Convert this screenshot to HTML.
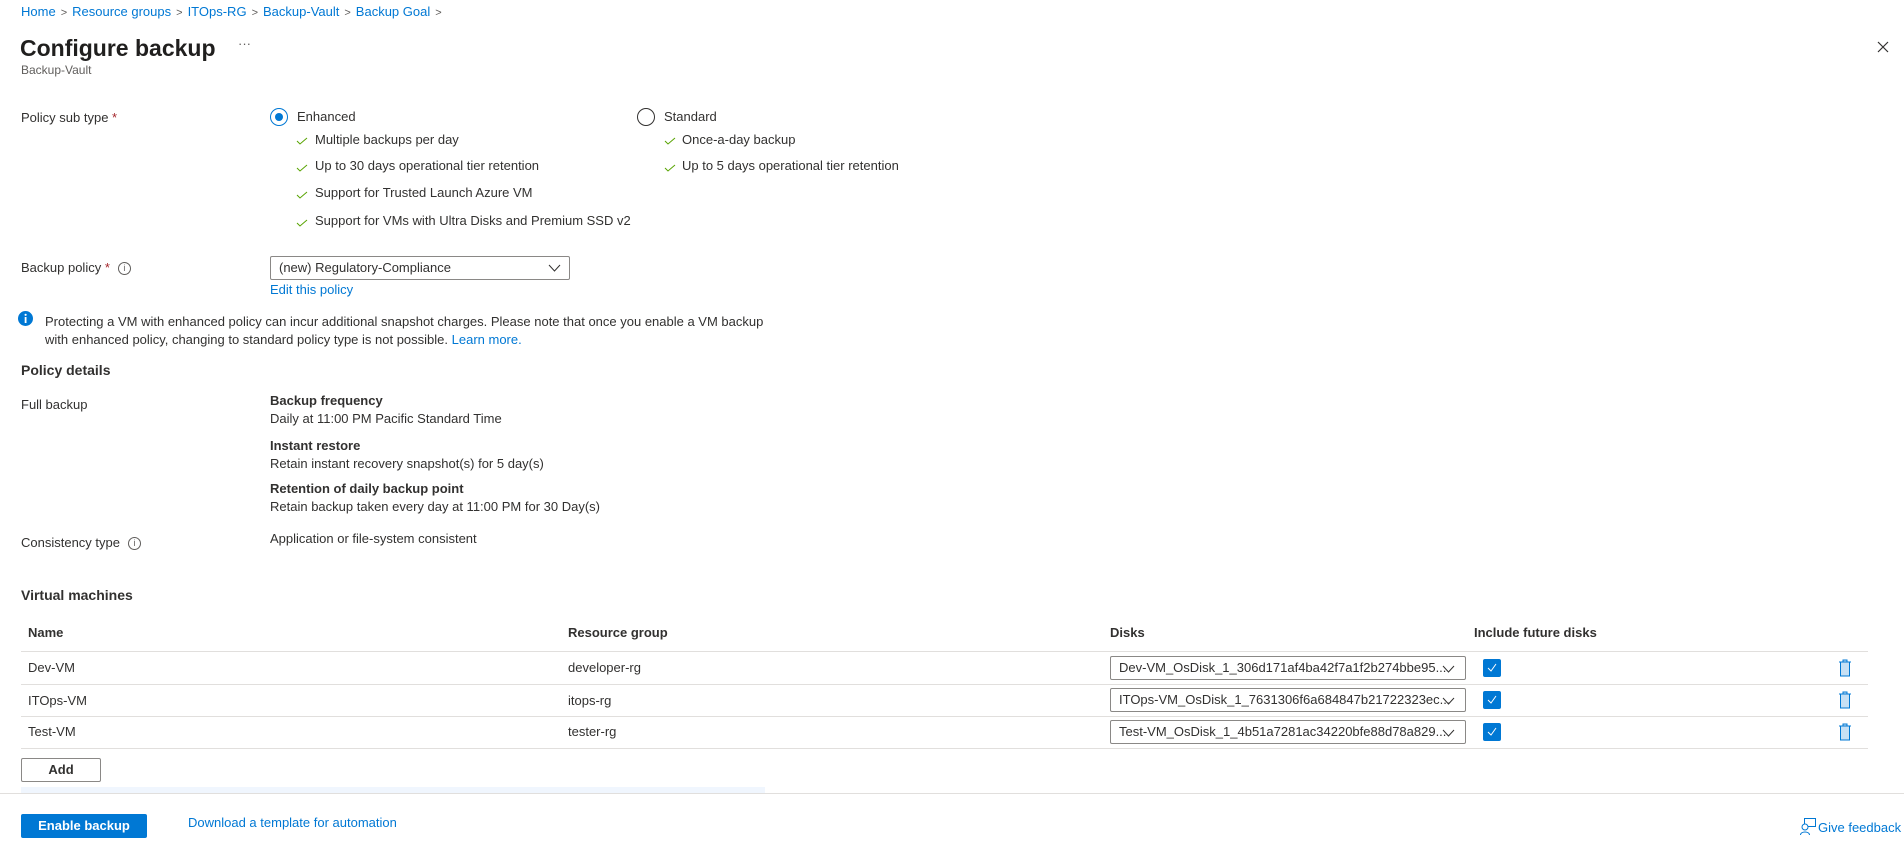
<!DOCTYPE html>
<html><head><meta charset="utf-8"><style>
*{box-sizing:border-box;margin:0;padding:0}
body{width:1904px;height:846px;overflow:hidden;background:#fff;font-family:"Liberation Sans",Arial,sans-serif;font-size:13px;color:#323130;position:relative}
.a{position:absolute;white-space:nowrap;line-height:16px}
.lnk{color:#0078d4}
.b{font-weight:bold}
.chk{position:absolute;width:12px;height:8px}
.row{position:absolute;left:21px;width:1847px;border-top:1px solid #e1dfdd}
.dd{position:absolute;left:1110px;width:356px;height:24px;border:1px solid #8a8886;border-radius:2px;padding:3px 28px 3px 8px;font-size:13px;line-height:16px;white-space:nowrap;overflow:hidden;background:#fff}
.cb{position:absolute;left:1483px;width:18px;height:18px;background:#0078d4;border-radius:2px}
.tr{position:absolute;left:1838px;}
.info{display:inline-block;width:13px;height:13px;border:1px solid #605e5c;border-radius:50%;font-size:9px;line-height:11px;text-align:center;color:#605e5c;vertical-align:middle;margin-left:8px}
.sep{color:#605e5c;font-size:11px;margin:0 5px}
</style></head><body>
<div class="a lnk" style="left:21px;top:4px">Home<span class="sep">&gt;</span>Resource groups<span class="sep">&gt;</span>ITOps-RG<span class="sep">&gt;</span>Backup-Vault<span class="sep">&gt;</span>Backup Goal<span class="sep">&gt;</span></div>
<div class="a" style="left:20px;top:34px;font-size:23px;line-height:28px;font-weight:600;color:#201f1e">Configure backup</div>
<div class="a" style="left:238px;top:36px;color:#605e5c">···</div>
<div class="a" style="left:21px;top:62px;font-size:12px;color:#605e5c">Backup-Vault</div>
<svg style="position:absolute;left:1877px;top:41px" width="12" height="12"><path d="M1 1L11 11M11 1L1 11" stroke="#323130" stroke-width="1.2"/></svg>

<div class="a" style="left:21px;top:110px">Policy sub type <span style="color:#a4262c">*</span></div>
<div style="position:absolute;left:270px;top:108px;width:18px;height:18px;border:1px solid #0078d4;border-radius:50%"><div style="position:absolute;left:4px;top:4px;width:8px;height:8px;border-radius:50%;background:#0078d4"></div></div>
<div class="a" style="left:297px;top:109px">Enhanced</div>
<div style="position:absolute;left:637px;top:108px;width:18px;height:18px;border:1px solid #323130;border-radius:50%"></div>
<div class="a" style="left:664px;top:109px">Standard</div>

<svg class="chk" style="left:296px;top:137px" viewBox="0 0 12 8"><path d="M1 4L4 7L11 1" fill="none" stroke="#57a300" stroke-width="1"/></svg>
<div class="a" style="left:315px;top:132px">Multiple backups per day</div>
<svg class="chk" style="left:296px;top:164px" viewBox="0 0 12 8"><path d="M1 4L4 7L11 1" fill="none" stroke="#57a300" stroke-width="1"/></svg>
<div class="a" style="left:315px;top:158px">Up to 30 days operational tier retention</div>
<svg class="chk" style="left:296px;top:191px" viewBox="0 0 12 8"><path d="M1 4L4 7L11 1" fill="none" stroke="#57a300" stroke-width="1"/></svg>
<div class="a" style="left:315px;top:185px">Support for Trusted Launch Azure VM</div>
<svg class="chk" style="left:296px;top:219px" viewBox="0 0 12 8"><path d="M1 4L4 7L11 1" fill="none" stroke="#57a300" stroke-width="1"/></svg>
<div class="a" style="left:315px;top:213px">Support for VMs with Ultra Disks and Premium SSD v2</div>
<svg class="chk" style="left:664px;top:137px" viewBox="0 0 12 8"><path d="M1 4L4 7L11 1" fill="none" stroke="#57a300" stroke-width="1"/></svg>
<div class="a" style="left:682px;top:132px">Once-a-day backup</div>
<svg class="chk" style="left:664px;top:164px" viewBox="0 0 12 8"><path d="M1 4L4 7L11 1" fill="none" stroke="#57a300" stroke-width="1"/></svg>
<div class="a" style="left:682px;top:158px">Up to 5 days operational tier retention</div>

<div class="a" style="left:21px;top:260px">Backup policy <span style="color:#a4262c">*</span><span class="info">i</span></div>
<div style="position:absolute;left:270px;top:256px;width:300px;height:24px;border:1px solid #8a8886;border-radius:2px;padding:3px 8px;line-height:16px">(new) Regulatory-Compliance
<svg style="position:absolute;right:8px;top:7px" width="13" height="8"><path d="M1 1L6.5 7L12 1" fill="none" stroke="#323130"/></svg></div>
<div class="a lnk" style="left:270px;top:282px">Edit this policy</div>

<svg style="position:absolute;left:18px;top:311px" width="15" height="15"><circle cx="7.5" cy="7.5" r="7.5" fill="#0078d4"/><rect x="6.7" y="6" width="1.8" height="6" fill="#fff"/><circle cx="7.6" cy="3.8" r="1.1" fill="#fff"/></svg>
<div class="a" style="left:45px;top:313px;line-height:18px;font-size:13px">Protecting a VM with enhanced policy can incur additional snapshot charges. Please note that once you enable a VM backup<br>with enhanced policy, changing to standard policy type is not possible. <span class="lnk">Learn more.</span></div>

<div class="a b" style="left:21px;top:362px;font-size:14px">Policy details</div>
<div class="a" style="left:21px;top:397px">Full backup</div>
<div class="a b" style="left:270px;top:393px">Backup frequency</div>
<div class="a" style="left:270px;top:411px">Daily at 11:00 PM Pacific Standard Time</div>
<div class="a b" style="left:270px;top:438px">Instant restore</div>
<div class="a" style="left:270px;top:456px">Retain instant recovery snapshot(s) for 5 day(s)</div>
<div class="a b" style="left:270px;top:481px">Retention of daily backup point</div>
<div class="a" style="left:270px;top:499px">Retain backup taken every day at 11:00 PM for 30 Day(s)</div>
<div class="a" style="left:21px;top:535px">Consistency type<span class="info">i</span></div>
<div class="a" style="left:270px;top:531px">Application or file-system consistent</div>

<div class="a b" style="left:21px;top:587px;font-size:14px">Virtual machines</div>
<div class="a" style="left:28px;top:625px;font-weight:600">Name</div>
<div class="a" style="left:568px;top:625px;font-weight:600">Resource group</div>
<div class="a" style="left:1110px;top:625px;font-weight:600">Disks</div>
<div class="a" style="left:1474px;top:625px;font-weight:600">Include future disks</div>
<div class="row" style="top:651px"></div>
<div class="row" style="top:684px"></div>
<div class="row" style="top:716px"></div>
<div class="row" style="top:748px"></div>

<div class="a" style="left:28px;top:660px">Dev-VM</div>
<div class="a" style="left:568px;top:660px">developer-rg</div>
<div class="dd" style="top:656px">Dev-VM_OsDisk_1_306d171af4ba42f7a1f2b274bbe95...</div>
<div class="a" style="left:28px;top:693px">ITOps-VM</div>
<div class="a" style="left:568px;top:693px">itops-rg</div>
<div class="dd" style="top:688px">ITOps-VM_OsDisk_1_7631306f6a684847b21722323ec...</div>
<div class="a" style="left:28px;top:724px">Test-VM</div>
<div class="a" style="left:568px;top:724px">tester-rg</div>
<div class="dd" style="top:720px">Test-VM_OsDisk_1_4b51a7281ac34220bfe88d78a829...</div>
<svg style="position:absolute;left:1442px;top:665px" width="13" height="8"><path d="M1 1L6.5 7L12 1" fill="none" stroke="#323130"/></svg>
<svg style="position:absolute;left:1442px;top:697px" width="13" height="8"><path d="M1 1L6.5 7L12 1" fill="none" stroke="#323130"/></svg>
<svg style="position:absolute;left:1442px;top:729px" width="13" height="8"><path d="M1 1L6.5 7L12 1" fill="none" stroke="#323130"/></svg>

<div class="cb" style="top:659px"><svg width="18" height="18"><path d="M5 9L8 12L13 5" fill="none" stroke="#fff"/></svg></div>
<div class="cb" style="top:691px"><svg width="18" height="18"><path d="M5 9L8 12L13 5" fill="none" stroke="#fff"/></svg></div>
<div class="cb" style="top:723px"><svg width="18" height="18"><path d="M5 9L8 12L13 5" fill="none" stroke="#fff"/></svg></div>

<svg class="tr" style="top:659px" width="14" height="18"><path d="M1 3H13M5 3V1H9V3M2.5 3V17H11.5V3" fill="#c7e0f4" stroke="#0078d4"/></svg>
<svg class="tr" style="top:691px" width="14" height="18"><path d="M1 3H13M5 3V1H9V3M2.5 3V17H11.5V3" fill="#c7e0f4" stroke="#0078d4"/></svg>
<svg class="tr" style="top:723px" width="14" height="18"><path d="M1 3H13M5 3V1H9V3M2.5 3V17H11.5V3" fill="#c7e0f4" stroke="#0078d4"/></svg>

<div style="position:absolute;left:21px;top:758px;width:80px;height:24px;border:1px solid #8a8886;border-radius:2px;text-align:center;line-height:22px;font-weight:600">Add</div>
<div style="position:absolute;left:21px;top:787px;width:744px;height:6px;background:#f0f6fe"></div>
<div style="position:absolute;left:0;top:793px;width:1904px;border-top:1px solid #e1dfdd"></div>

<div style="position:absolute;left:21px;top:814px;width:126px;height:24px;background:#0078d4;border-radius:2px;color:#fff;text-align:center;line-height:24px;font-weight:600">Enable backup</div>
<div class="a lnk" style="left:188px;top:815px">Download a template for automation</div>
<svg style="position:absolute;left:1800px;top:818px" width="16" height="17"><rect x="4.5" y="0.5" width="11" height="8" fill="none" stroke="#0078d4"/><circle cx="5" cy="9" r="3" fill="#fff" stroke="#0078d4"/><path d="M0.5 17C0.5 13 9.5 13 9.5 17" fill="none" stroke="#0078d4"/></svg>
<div class="a lnk" style="left:1818px;top:820px">Give feedback</div>
</body></html>
